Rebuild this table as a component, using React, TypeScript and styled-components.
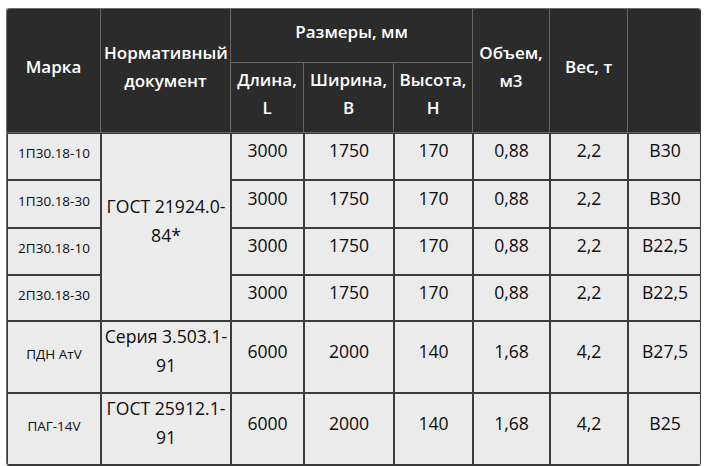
import styled, { createGlobalStyle } from "styled-components";

const GlobalStyle = createGlobalStyle`
    body {
        margin: 0;
        background: #ffffff;
        font-family: "Open Sans", "Liberation Sans", sans-serif;
    }
`;

// White page area around the table
const Page = styled.div`
    padding: 8px 7px 0 6px;
`;

// Outer frame with slightly rounded corners
const Frame = styled.div`
    width: 695px;
    border-radius: 3px;
    overflow: hidden;
    border: 1px solid #6f6f6f;
    border-bottom-color: #3a3a3a;
    border-right-color: #3a3a3a;
    box-sizing: border-box;
`;

const Table = styled.table`
    width: 100%;
    table-layout: fixed;
    border-collapse: separate;
    border-spacing: 0;
`;

// Dark header cells, bold white text
const HeadCell = styled.th<{ $last?: boolean }>`
    background: #2b2b2b;
    color: #ffffff;
    font-weight: 600;
    font-size: 17px;
    line-height: 28px;
    padding: 0 3px 8px;
    text-align: center;
    vertical-align: middle;
    border-right: ${(p) => (p.$last ? "none" : "1px solid #666666")};
    border-bottom: 1px solid #666666;
`;

const HeadRow = styled.tr<{ $h: number }>`
    height: ${(p) => p.$h}px;
`;

const Row = styled.tr<{ $h: number }>`
    height: ${(p) => p.$h}px;
`;

// Light grey body cells with dark grid lines; the mark column uses smaller text
const Cell = styled.td<{ $small?: boolean }>`
    background: #ebebeb;
    color: #0d0d0d;
    font-size: ${(p) => (p.$small ? "13.5px" : "17.6px")};
    line-height: 29px;
    padding: ${(p) => (p.$small ? "0 1px 6px" : "0 1px 12px")};
    text-align: center;
    vertical-align: middle;
    border: 1px solid #3c3c3c;
`;

type Item = {
    mark: string;
    doc?: string;
    span?: number;
    len: string;
    wid: string;
    hei: string;
    vol: string;
    weight: string;
    cls: string;
    h: number;
};

const rows: Item[] = [
    { mark: "1П30.18-10", doc: "ГОСТ 21924.0-84*", span: 4, len: "3000", wid: "1750", hei: "170", vol: "0,88", weight: "2,2", cls: "В30", h: 47 },
    { mark: "1П30.18-30", len: "3000", wid: "1750", hei: "170", vol: "0,88", weight: "2,2", cls: "В30", h: 48 },
    { mark: "2П30.18-10", len: "3000", wid: "1750", hei: "170", vol: "0,88", weight: "2,2", cls: "В22,5", h: 47 },
    { mark: "2П30.18-30", len: "3000", wid: "1750", hei: "170", vol: "0,88", weight: "2,2", cls: "В22,5", h: 46 },
    { mark: "ПДН АтV", doc: "Серия 3.503.1-91", span: 1, len: "6000", wid: "2000", hei: "140", vol: "1,68", weight: "4,2", cls: "В27,5", h: 70 },
    { mark: "ПАГ-14V", doc: "ГОСТ 25912.1-91", span: 1, len: "6000", wid: "2000", hei: "140", vol: "1,68", weight: "4,2", cls: "В25", h: 69 },
];

const widths = [94, 130, 73, 90, 79, 77, 78, 74];

export default function App() {
    return (
        <Page>
            <GlobalStyle />
            <Frame>
                <Table>
                    <colgroup>
                        {widths.map((w, i) => (
                            <col key={i} style={{ width: w }} />
                        ))}
                    </colgroup>
                    <thead>
                        <HeadRow $h={54}>
                            <HeadCell rowSpan={2}>Марка</HeadCell>
                            <HeadCell rowSpan={2}>Нормативный документ</HeadCell>
                            <HeadCell colSpan={3}>Размеры, мм</HeadCell>
                            <HeadCell rowSpan={2}>Объем, м3</HeadCell>
                            <HeadCell rowSpan={2}>Вес, т</HeadCell>
                            <HeadCell rowSpan={2} $last></HeadCell>
                        </HeadRow>
                        <HeadRow $h={70}>
                            <HeadCell>Длина, L</HeadCell>
                            <HeadCell>Ширина, B</HeadCell>
                            <HeadCell>Высота, H</HeadCell>
                        </HeadRow>
                    </thead>
                    <tbody>
                        {rows.map((r) => (
                            <Row key={r.mark} $h={r.h}>
                                <Cell $small>{r.mark}</Cell>
                                {r.doc && <Cell rowSpan={r.span}>{r.doc}</Cell>}
                                <Cell>{r.len}</Cell>
                                <Cell>{r.wid}</Cell>
                                <Cell>{r.hei}</Cell>
                                <Cell>{r.vol}</Cell>
                                <Cell>{r.weight}</Cell>
                                <Cell>{r.cls}</Cell>
                            </Row>
                        ))}
                    </tbody>
                </Table>
            </Frame>
        </Page>
    );
}
